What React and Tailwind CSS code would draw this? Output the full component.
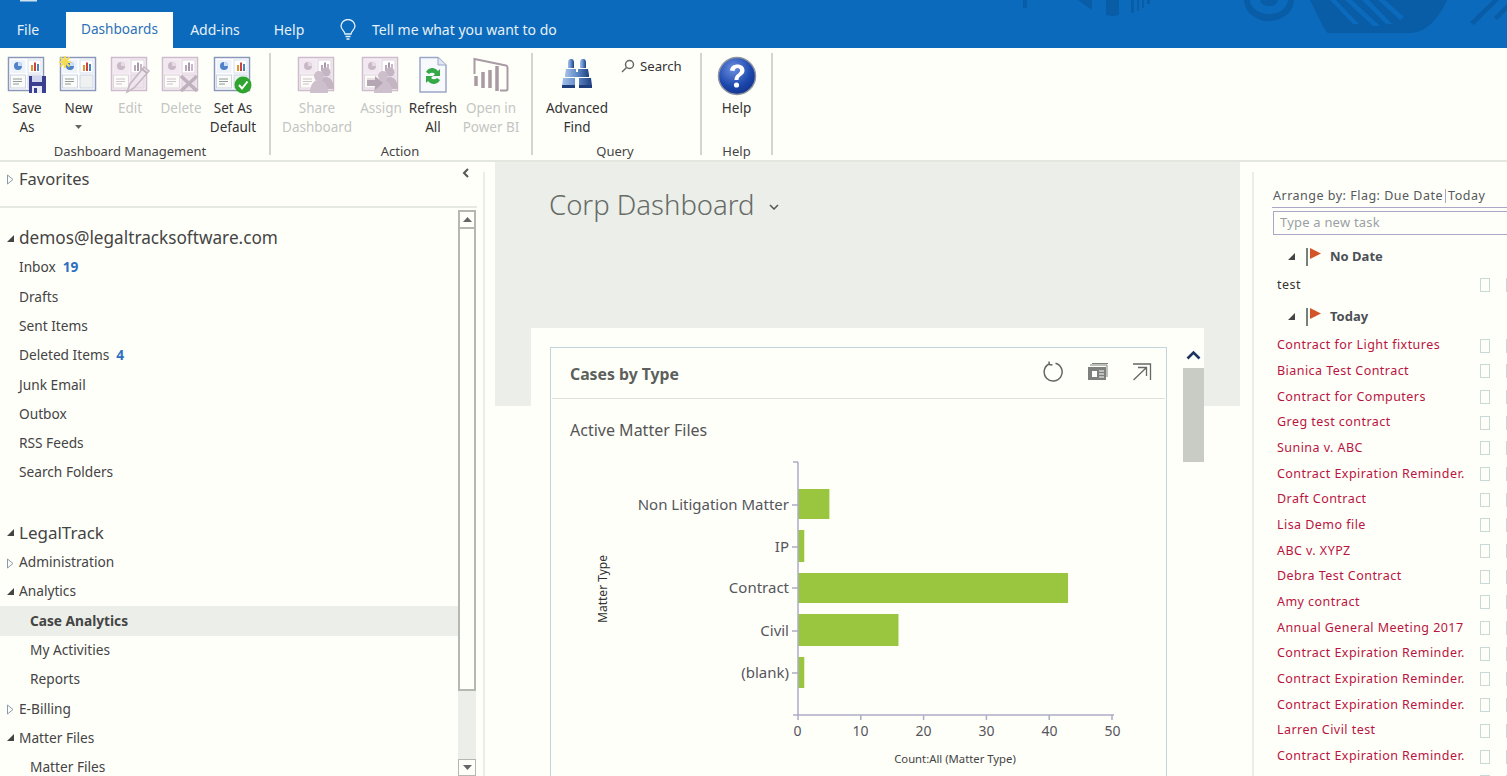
import React from "react";

const Tri = ({ open, className = "" }) =>
  open ? (
    <svg width="9" height="9" viewBox="0 0 9 9" className={className}><path d="M8 1V8H1z" fill="#444" /></svg>
  ) : (
    <svg width="9" height="11" viewBox="0 0 9 11" className={className}><path d="M1.500 1l5.500 4.500L1.500 10z" fill="none" stroke="#8d9aa8" /></svg>
  );

function DashIcon({ variant, children }) {
  const off = variant === "off";
  const line = off ? "#cdbccb" : "#8a97b8";
  const c1 = off ? "#c9b9c7" : "#4f82c8";
  const b = off ? ["#b9a9b8", "#a999a8", "#c9b9c8"] : ["#e0952e", "#c9453b", "#4a86c4"];
  return (
    <svg width="40" height="40" viewBox="0 0 40 40" className="block">
      <rect x="1.500" y="1.500" width="35" height="33" fill={off ? "#f6eef4" : "#fff"} stroke={line} strokeWidth="1.500" />
      <rect x="3.500" y="4" width="15" height="13" fill={off ? "#f2e8f0" : "#eef3fb"} />
      <rect x="21" y="4" width="13" height="13" fill="#fff" stroke={off ? "#e0d4de" : "#d8dfee"} />
      <rect x="3.500" y="19" width="15" height="13" fill="#fbfbf7" stroke={off ? "#e0d4de" : "#cdd5e5"} />
      <rect x="21" y="19" width="13" height="13" fill={off ? "#eee4ec" : "#eef1f0"} stroke={off ? "#e0d4de" : "#cdd5e5"} />
      <circle cx="11" cy="10" r="4" fill={c1} />
      <path d="M11 10V6a4 4 0 0 1 4 4z" fill={off ? "#e6dbe4" : "#cfe0f5"} />
      <rect x="24" y="9" width="2" height="6" fill={b[0]} />
      <rect x="27" y="6.500" width="2" height="8.500" fill={b[1]} />
      <rect x="30" y="8" width="2" height="7" fill={b[2]} />
      <path d="M6 23h9M6 25.500h9M6 28h6" stroke={off ? "#cfc3cd" : "#8e9a9a"} strokeWidth="1" />
      {children}
    </svg>
  );
}

const Floppy = () => (
  <g>
    <rect x="22" y="20" width="17" height="17" fill="#3a3f8f" />
    <rect x="25" y="20" width="10" height="6" fill="#cfd6ee" />
    <rect x="25" y="30" width="10" height="7" fill="#e8ecf8" />
    <rect x="27" y="32" width="3" height="5" fill="#3a3f8f" />
  </g>
);
const Star = () => (
  <g stroke="#f4dc55" strokeWidth="2">
    <path d="M6 0v12M0 6h12M1.500 1.500l9 9M10.500 1.500l-9 9" />
  </g>
);
const Pencil = () => (
  <g>
    <path d="M17 36l3-8L34 11l5 4-15 17z" fill="#f0e6ee" stroke="#c4b6c3" strokeWidth="1.500" />
    <path d="M32 13l5 4" stroke="#bdaebb" strokeWidth="2" />
  </g>
);
const Cross = () => <path d="M20 20l16 15M36 20L20 35" stroke="#bfb1bd" strokeWidth="3.500" />;
const Check = () => (
  <g>
    <circle cx="30" cy="29" r="8.500" fill="#2fa52f" />
    <path d="M26 29l3 3.500 5.500-7" fill="none" stroke="#fff" strokeWidth="2" />
  </g>
);
const People = ({ arrow }) => (
  <g fill="#c3b5c2">
    <circle cx="29" cy="16" r="4.500" />
    <path d="M22 33c0-8 3-12 7-12s8 4 8 12z" />
    <circle cx="22" cy="20" r="5" fill="#cdbfcc" />
    <path d="M13 37c0-9 4-13 9-13s9 4 9 13z" fill="#cdbfcc" />
    {arrow && <path d="M6 24h8v-4l8 7-8 7v-4H6z" fill="#b5a6b3" />}
  </g>
);

const Refresh = () => (
  <svg width="30" height="38" viewBox="0 0 30 38" className="block">
    <path d="M2 1.500h18L28 9v27H2z" fill="#f7f9fd" stroke="#9aa7c5" strokeWidth="1.500" />
    <path d="M20 1.500V9h8" fill="#dfe5f1" stroke="#9aa7c5" />
    <path d="M8 16a7 7 0 0 1 12-1l2-2v7h-7l2-2a4 4 0 0 0-6 0z" fill="#35a947" />
    <path d="M22 24a7 7 0 0 1-12 1l-2 2v-7h7l-2 2a4 4 0 0 0 6 0z" fill="#35a947" />
  </svg>
);
const PowerBI = () => (
  <svg width="38" height="38" viewBox="0 0 38 38" className="block" fill="none" stroke="#a89ba4">
    <path d="M2.500 18V3L34 9.500q1.500.3 1.500 2V33q0 1.500-1.500 1.500h-6" strokeWidth="2" />
    <path d="M3 20v10M10 16v16M17 14v18M24 10v25" strokeWidth="3.500" transform="translate(1 0)" />
  </svg>
);
const Binoculars = () => (
  <svg width="36" height="32" viewBox="0 0 36 32" className="mt-[2px] block">
    <defs>
      <linearGradient id="bg" x1="0" x2="1"><stop offset="0" stopColor="#a5c0e8" /><stop offset="0.5" stopColor="#5f8ac8" /><stop offset="1" stopColor="#1f3f80" /></linearGradient>
    </defs>
    <path d="M9 5q0-4 2.500-4h1q2.500 0 2.500 4v5H9z" fill="url(#bg)" />
    <path d="M21 5q0-4 2.500-4h1q2.500 0 2.500 4v5h-6z" fill="url(#bg)" />
    <path d="M7 11h10v3h2v-3h10l1 6v2H6v-2z" fill="url(#bg)" />
    <path d="M4 20h12v8H3zM20 20h12l1 8H20z" fill="url(#bg)" />
    <rect x="3" y="27" width="13" height="3" fill="#1d3d7c" />
    <rect x="20" y="27" width="13" height="3" fill="#1d3d7c" />
  </svg>
);
const HelpIcon = () => (
  <svg width="40" height="40" viewBox="0 0 40 40" className="block">
    <defs>
      <radialGradient id="hg" cx="0.4" cy="0.3" r="0.8"><stop offset="0" stopColor="#6d8fe0" /><stop offset="0.6" stopColor="#1c48ad" /><stop offset="1" stopColor="#102c85" /></radialGradient>
    </defs>
    <circle cx="20" cy="20" r="18.500" fill="url(#hg)" stroke="#8d949e" strokeWidth="1.500" />
    <path d="M13 14.500c.5-4 3.500-6 7.500-6s7 2.300 7 6c0 5-6 5-6 9.500h-4c0-6 5.500-6 5.500-9.500 0-1.500-1-2.500-2.500-2.500s-2.800 1-3 3z" fill="#fff" />
    <circle cx="19.500" cy="29" r="2.600" fill="#fff" />
  </svg>
);

function RBtn({ w, label1, label2, off, arrow, children }) {
  return (
    <div className={`flex shrink-0 flex-col items-center ${w}`}>
      <div className="flex h-[42px] items-start justify-center">{children}</div>
      <div className={`mt-[1px] whitespace-nowrap text-center text-[13.5px] leading-[19px] ${off ? "text-[#c3c5c3]" : "text-[#333]"}`}>
        <div>{label1}</div>
        {label2 && <div>{label2}</div>}
        {arrow && <div className="mt-[-1px] flex h-[19px] items-center justify-center"><svg width="7" height="4"><path d="M0 0h7L3.500 4z" fill="#666" /></svg></div>}
      </div>
    </div>
  );
}

function Group({ w, label, pl = "pl-0", lab = "", children }) {
  return (
    <div className={`flex h-full shrink-0 flex-col ${w}`}>
      <div className={`flex h-[94px] pt-[8px] ${pl}`}>{children}</div>
      <div className={`text-center text-[13px] leading-[18px] text-[#444] ${lab}`}>{label}</div>
    </div>
  );
}
const Sep = () => <div className="mt-[5px] h-[102px] w-[2px] shrink-0 bg-[#d3d5cf]" />;

const mail = [["Inbox", "19"], ["Drafts"], ["Sent Items"], ["Deleted Items", "4"], ["Junk Email"], ["Outbox"], ["RSS Feeds"], ["Search Folders"]];

function Row({ children, indent = "pl-[19px]", className = "" }) {
  return <div className={`flex h-[29.3px] items-center text-[13.7px] text-[#444] ${indent} ${className}`}>{children}</div>;
}
function Head({ open, children }) {
  return (
    <div className="relative flex h-[29.3px] items-center pl-[19px] text-[13.7px] text-[#444]">
      <Tri open={open} className="absolute left-[6px] top-[10px]" />
      {children}
    </div>
  );
}

const tasks = ["Contract for Light fixtures", "Bianica Test Contract", "Contract for Computers", "Greg test contract", "Sunina v. ABC", "Contract Expiration Reminder.", "Draft Contract", "Lisa Demo file", "ABC v. XYPZ", "Debra Test Contract", "Amy contract", "Annual General Meeting 2017", "Contract Expiration Reminder.", "Contract Expiration Reminder.", "Contract Expiration Reminder.", "Larren Civil test", "Contract Expiration Reminder.", "Contract Expiration Reminder."];

function Flag() {
  return (
    <svg width="16" height="18" viewBox="0 0 16 18" className="block">
      <rect x="0" y="0" width="2" height="18" fill="#77807a" />
      <path d="M4 0l11 5.500L4 11z" fill="#d4542a" />
    </svg>
  );
}
function TaskGroup({ label }) {
  return (
    <div className="flex items-center">
      <svg width="9" height="9" viewBox="0 0 9 9" className="ml-[15px]"><path d="M8 1V8H1z" fill="#444" /></svg>
      <div className="ml-[10px]"><Flag /></div>
      <div className="ml-[8px] text-[13px] font-bold text-[#4c4f55]">{label}</div>
    </div>
  );
}
function Task({ children, color = "text-[#b8143f]" }) {
  return (
    <div className="flex h-[25.7px] items-center">
      <div className={`w-[208px] shrink-0 pl-[5px] text-[12.5px] tracking-[0.45px] whitespace-nowrap ${color}`}>{children}</div>
      <div className="h-[14px] w-[10px] shrink-0 border border-[#cbd8d8]" />
      <div className="ml-[16px] h-[14px] w-[10px] shrink-0 border border-[#cbd8d8]" />
    </div>
  );
}

function Chart() {
  const bars = [[490, 30, 5], [531, 32, 1], [574, 30, 43], [615, 32, 16], [658, 31, 1]];
  const labels = [["Non Litigation Matter", 506], ["IP", 548], ["Contract", 589], ["Civil", 632], ["(blank)", 674]];
  const axis = "#aeacc6";
  return (
    <svg width="614" height="331" viewBox="551 445 614 331" className="block">
      {bars.map(([y, h, v]) => (
        <rect key={y} x="798" y={y} width={v * 6.28} height={h} fill="#99c63e" />
      ))}
      <path d="M798 463V716H1114M793 463h5M793 716h5M798 716v5M860.800 716v5M923.600 716v5M986.400 716v5M1049.200 716v5M1112 716v5" fill="none" stroke={axis} strokeWidth="1.500" />
      {labels.map(([t, y]) => (
        <g key={t}>
          <path d={`M792 ${y}h6`} stroke={axis} strokeWidth="1.500" />
          <text x="789" y={y + 5} textAnchor="end" fontSize="15" fill="#55565c">{t}</text>
        </g>
      ))}
      {[0, 10, 20, 30, 40, 50].map((v, i) => (
        <text key={v} x={797.500 + i * 63} y="737" textAnchor="middle" fontSize="14" fill="#55565c">{v}</text>
      ))}
      <text x="955" y="764" textAnchor="middle" fontSize="11.300" fill="#444">Count:All (Matter Type)</text>
      <text transform="translate(607 590) rotate(-90)" textAnchor="middle" fontSize="12" fill="#333">Matter Type</text>
    </svg>
  );
}

export default function App() {
  return (
    <div className="flex h-[776px] w-[1507px] flex-col overflow-hidden bg-[#fffffa] font-['Noto_Sans',sans-serif] text-[#444]">
      {/* Title / tabs */}
      <div className="relative flex h-[48px] shrink-0 items-end bg-[#0b6abb] text-[14px] text-[#e6f0f8]">
        <svg width="1507" height="48" className="absolute left-0 top-0" fill="#095ca6">
          <rect x="20" y="0" width="17" height="1.500" fill="#cfe0f0" />
          <rect x="1023" y="0" width="4" height="8" />
          <path d="M1078 0h14v10z" />
          <path d="M1106 0h13v15l-6 1-7-1z" />
          <path d="M1131 0h3v13h-3zM1137 0h2v11h-2zM1142 0h2v8h-2zM1147 0h3v4h-3z" />
          <path d="M1244 0a25 21 0 0 0 50 0h-6a19 14 0 0 1-38 0z" />
          <path d="M1260 0a9 6 0 0 0 18 0z" />
          <path d="M1310 0h137c-7 16-20 33-37 33h-82c-2 0-9-15-18-33z" />
          <path d="M1330 0l23 24h6L1336 0zM1345 0l28 26h7L1352 0zM1362 0l24 24h6L1369 0zM1378 0l22 20 4-3L1385 0z" fill="#0b6abb" />
          <path d="M1470 22L1493 0h6L1474 25zM1494 17l13-13v6l-10 10z" />
        </svg>
        <div className="relative flex h-[36px] w-[56px] items-center justify-center pb-[1px]">File</div>
        <div className="relative ml-[10px] flex h-[36px] w-[107px] items-center justify-center bg-[#fffffa] pb-[1px] text-[13.6px] text-[#2c71b8]">Dashboards</div>
        <div className="relative flex h-[36px] w-[84px] items-center justify-center pb-[1px]">Add-ins</div>
        <div className="relative flex h-[36px] w-[64px] items-center justify-center pb-[1px]">Help</div>
        <div className="relative ml-[18px] flex h-[36px] items-center pb-[1px]">
          <svg width="18" height="22" viewBox="0 0 18 22" fill="none" stroke="#e6f0f8" strokeWidth="1.300">
            <path d="M6 15c0-3-4-4-4-8a7 6.500 0 0 1 14 0c0 4-4 5-4 8z" />
            <path d="M6.500 17.500h5M7.500 20h3" />
          </svg>
          <span className="ml-[15px] text-[14px]">Tell me what you want to do</span>
        </div>
      </div>

      {/* Ribbon */}
      <div className="flex h-[114px] shrink-0 border-b-2 border-[#e4e6e0]">
        <Group w="w-[269px]" label="Dashboard Management" lab="pr-[9px]">
          <RBtn w="w-[54px]" label1="Save" label2="As"><DashIcon><Floppy /></DashIcon></RBtn>
          <RBtn w="w-[49px]" label1="New" arrow>
            <DashIcon><Star /></DashIcon>
          </RBtn>
          <RBtn w="w-[54px]" label1="Edit" off><DashIcon variant="off"><Pencil /></DashIcon></RBtn>
          <RBtn w="w-[48px]" label1="Delete" off><DashIcon variant="off"><Cross /></DashIcon></RBtn>
          <RBtn w="w-[56px]" label1="Set As" label2="Default"><DashIcon><Check /></DashIcon></RBtn>
        </Group>
        <Sep />
        <Group w="w-[260px]" label="Action" pl="pl-[6px]" lab="pr-[2px]">
          <RBtn w="w-[80px]" label1="Share" label2="Dashboard" off><DashIcon variant="off"><People /></DashIcon></RBtn>
          <RBtn w="w-[48px]" label1="Assign" off><DashIcon variant="off"><People arrow /></DashIcon></RBtn>
          <RBtn w="w-[56px]" label1="Refresh" label2="All"><Refresh /></RBtn>
          <RBtn w="w-[60px]" label1="Open in" label2="Power BI" off><PowerBI /></RBtn>
        </Group>
        <Sep />
        <Group w="w-[167px]" label="Query" lab="pr-[3px]">
          <RBtn w="w-[88px]" label1="Advanced" label2="Find"><Binoculars /></RBtn>
          <div className="flex items-start pt-[1px]">
            <svg width="14" height="14" viewBox="0 0 14 14" fill="none" stroke="#666" strokeWidth="1.500" className="mt-[2px]">
              <circle cx="8.500" cy="5.500" r="4" /><path d="M5.500 8.500L1 13" />
            </svg>
            <span className="ml-[5px] text-[13.2px] leading-[18px] text-[#333]">Search</span>
          </div>
        </Group>
        <Sep />
        <Group w="w-[69px]" label="Help">
          <RBtn w="w-[69px]" label1="Help"><HelpIcon /></RBtn>
        </Group>
        <Sep />
      </div>

      {/* Body */}
      <div className="flex min-h-0 flex-1">
        {/* Sidebar */}
        <div className="flex w-[483px] shrink-0 flex-col">
          <div className="flex h-[46px] w-[477px] shrink-0 items-start justify-between border-b-2 border-[#e6e8e2]">
            <div className="relative flex h-[34px] items-center pl-[19px] text-[16.5px] text-[#444]">
              <Tri className="absolute left-[6px] top-[12px]" />
              Favorites
            </div>
            <svg width="8" height="10" viewBox="0 0 8 10" className="mr-[7px] mt-[6px]"><path d="M6 1L2 5l4 4" fill="none" stroke="#555" strokeWidth="2" /></svg>
          </div>
          <div className="flex min-h-0 flex-1 pt-[2px]">
            <div className="w-[458px] shrink-0 overflow-hidden pt-[13px]">
              <div className="relative flex h-[30px] items-center pl-[19px] text-[17.2px] text-[#444]">
                <Tri open className="absolute left-[6px] top-[11px]" />
                demos@legaltracksoftware.com
              </div>
              {mail.map(([t, n]) => (
                <Row key={t}>
                  {t}
                  {n && <span className="ml-[7px] font-bold text-[#2f6fc0]">{n}</span>}
                </Row>
              ))}
              <div className="h-[31px]" />
              <div className="relative flex h-[29.3px] items-center pl-[19px] text-[17px] text-[#444]">
                <Tri open className="absolute left-[6px] top-[10px]" />
                LegalTrack
              </div>
              <Head>Administration</Head>
              <Head open>Analytics</Head>
              <Row indent="pl-[30px]" className="bg-[#ebeee9] font-bold text-[#333]">Case Analytics</Row>
              <Row indent="pl-[30px]">My Activities</Row>
              <Row indent="pl-[30px]">Reports</Row>
              <Head>E-Billing</Head>
              <Head open>Matter Files</Head>
              <Row indent="pl-[30px]">Matter Files</Row>
            </div>
            <div className="flex w-[18px] shrink-0 flex-col bg-[#ebeee9]">
              <div className="flex h-[19px] items-center justify-center border-2 border-[#b5b7b1] bg-[#fffffa]">
                <svg width="9" height="5"><path d="M4.500 0L9 5H0z" fill="#666" /></svg>
              </div>
              <div className="h-[462px] border-x-2 border-b-2 border-[#b5b7b1] bg-[#fffffa]" />
              <div className="flex-1" />
              <div className="flex h-[17px] items-center justify-center border border-[#b5b7b1] bg-[#fffffa]">
                <svg width="9" height="5"><path d="M0 0h9L4.500 5z" fill="#666" /></svg>
              </div>
            </div>
          </div>
        </div>
        <div className="mt-[10px] w-[2px] shrink-0 bg-[#ebede7]" />

        {/* Main */}
        <div className="ml-[10px] w-[745px] shrink-0 bg-[linear-gradient(to_bottom,#ebeee9_244px,transparent_244px)]">
          <div className="flex h-[166px] items-start pl-[54px] pt-[22px]">
            <span className="text-[27.5px] font-light leading-[42px] text-[#666b66]">Corp Dashboard</span>
            <svg width="10" height="6" viewBox="0 0 10 6" className="ml-[14px] mt-[20px]"><path d="M1 1l4 4 4-4" fill="none" stroke="#555" strokeWidth="1.500" /></svg>
          </div>
          <div className="ml-[36px] flex h-[500px] w-[673px] bg-[#fffffa] pl-[19px] pt-[19px]">
            <div className="h-[600px] w-[617px] shrink-0 border border-[#c3d3da]">
              <div className="mx-[1px] flex h-[51px] items-center justify-between border-b border-[#dfe3dc] pl-[18px] pr-[13px]">
                <span className="pt-[4px] text-[15.8px] font-bold text-[#5c5f5c]">Cases by Type</span>
                <div className="flex items-center gap-[23px] pb-[3px]">
                  <svg width="22" height="22" viewBox="0 0 22 22" fill="none" stroke="#666" strokeWidth="1.500">
                    <path d="M13.500 2.300A9 9 0 1 1 7 3" />
                    <path d="M7 0.500L7.300 3.500 10.500 4" />
                  </svg>
                  <svg width="22" height="18" viewBox="0 0 22 18">
                    <rect x="1" y="4" width="18" height="13" fill="#7d807c" />
                    <path d="M3 2h17v12M5 0.500h16" fill="none" stroke="#7d807c" />
                    <rect x="5" y="8" width="5" height="6" fill="#fffffa" />
                    <path d="M12 8h5M12 11h5M12 14h5" stroke="#fffffa" />
                  </svg>
                  <svg width="20" height="18" viewBox="0 0 20 18" fill="none" stroke="#666" strokeWidth="1.300">
                    <path d="M1 1h17.500v16M14.500 4.500L1.500 17M6 4.500h8.500V13" />
                  </svg>
                </div>
              </div>
              <div className="pl-[19px] pt-[20px] text-[16px] leading-[22px] text-[#555]">Active Matter Files</div>
              <div className="mt-[3px]"><Chart /></div>
            </div>
            <div className="ml-[16px] w-[21px] shrink-0">
              <div className="flex h-[21px] items-center justify-center pb-[6px]">
                <svg width="15" height="10" viewBox="0 0 15 10"><path d="M1.500 8.500L7.500 2.500l6 6" fill="none" stroke="#1d3461" strokeWidth="2.600" /></svg>
              </div>
              <div className="h-[94px] bg-[#c9ccc5]" />
            </div>
          </div>
        </div>

        {/* Right */}
        <div className="ml-[12px] mt-[10px] w-[2px] shrink-0 bg-[#ebede7]" />
        <div className="flex-1 overflow-hidden pl-[18px]">
          <div className="mt-[23px] flex h-[23px] w-[240px] items-center border-b border-[#aaa8c6] pl-[1px] text-[12.5px] tracking-[0.5px] text-[#55595c]">
            <span>Arrange by: Flag: Due Date</span>
            <span className="mx-[2px] h-[14px] w-px bg-[#aaa8c6]" />
            <span className="whitespace-nowrap">Today</span>
          </div>
          <div className="ml-[1px] mt-[3px] flex h-[24px] w-[240px] items-center border border-[#aaa8c6] pl-[6px] text-[13px] tracking-[0.2px] text-[#9a9fa5]">Type a new task</div>
          <div className="mt-[12px]"><TaskGroup label="No Date" /></div>
          <div className="mt-[6px]"><Task color="text-[#333]">test</Task></div>
          <div className="mt-[9px]"><TaskGroup label="Today" /></div>
          <div className="mt-[6px]">
            {tasks.map((t, i) => <Task key={i}>{t}</Task>)}
          </div>
        </div>
      </div>
    </div>
  );
}
